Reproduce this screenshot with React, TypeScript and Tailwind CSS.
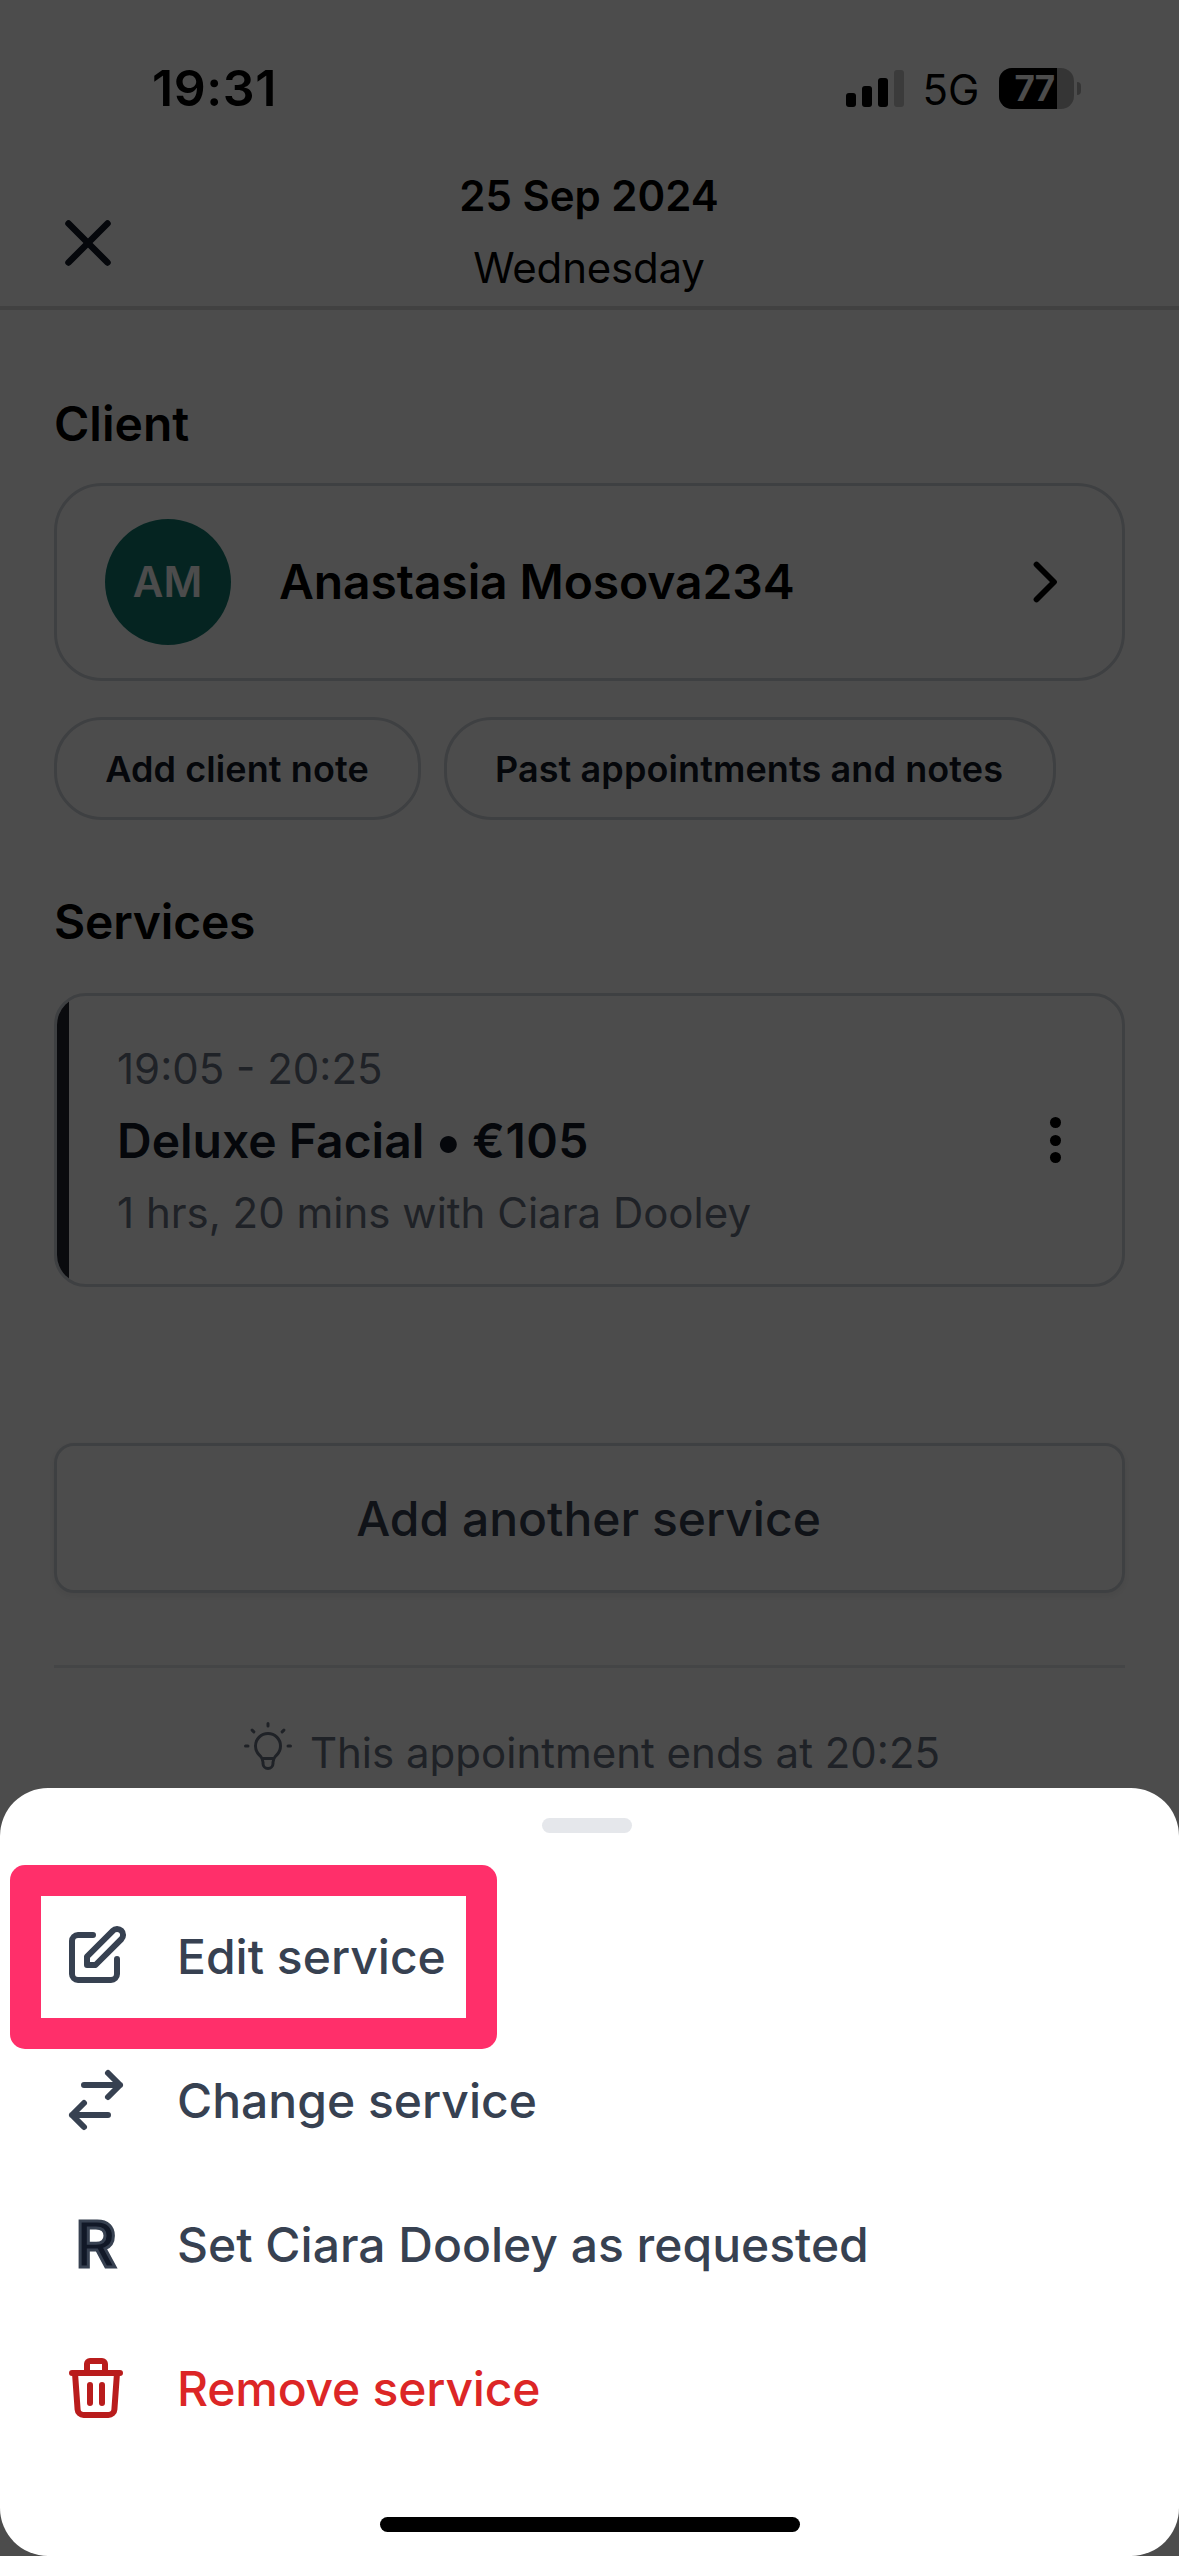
import React from 'react';

interface SheetAction {
  id: string;
  label: string;
  icon: React.ReactNode;
  danger?: boolean;
}

interface OutlineIconProps {
  d: string;
  className?: string;
  strokeWidth?: number;
}

function OutlineIcon({ d, className = 'size-[72px]', strokeWidth = 2 }: OutlineIconProps) {
  return (
    <svg
      viewBox="0 0 24 24"
      fill="none"
      stroke="currentColor"
      strokeWidth={strokeWidth}
      strokeLinecap="round"
      strokeLinejoin="round"
      className={`shrink-0 ${className}`}
    >
      <path d={d} />
    </svg>
  );
}

const icons = {
  close: 'M6 18L18 6M6 6l12 12',
  chevron: 'M9 5l7 7-7 7',
  bulb: 'M9.663 17h4.673M12 3v1m6.364 1.636l-.707.707M21 12h-1M4 12H3m3.343-5.657l-.707-.707m2.828 9.9a5 5 0 117.072 0l-.548.547A3.374 3.374 0 0014 18.469V19a2 2 0 11-4 0v-.531c0-.895-.356-1.754-.988-2.386l-.548-.547z',
  edit: 'M11 5H6a2 2 0 00-2 2v11a2 2 0 002 2h11a2 2 0 002-2v-5m-1.414-9.414a2 2 0 112.828 2.828L11.828 15H9v-2.828l8.586-8.586z',
  swap: 'M8 7h12m0 0l-4-4m4 4l-4 4m0 6H4m0 0l4 4m-4-4l4-4',
  trash: 'M19 7l-.867 12.142A2 2 0 0116.138 21H7.862a2 2 0 01-1.995-1.858L5 7m5 4v6m4-6v6m1-10V4a1 1 0 00-1-1h-4a1 1 0 00-1 1v3M4 7h16',
};

const actions: SheetAction[] = [
  { id: 'edit', label: 'Edit service', icon: <OutlineIcon d={icons.edit} /> },
  { id: 'change', label: 'Change service', icon: <OutlineIcon d={icons.swap} /> },
  {
    id: 'request',
    label: 'Set Ciara Dooley as requested',
    icon: (
      <span className="w-[72px] text-center text-[63px] leading-[72px] font-semibold text-[#111827] [-webkit-text-stroke:3px_#374151]">
        R
      </span>
    ),
  },
  { id: 'remove', label: 'Remove service', icon: <OutlineIcon d={icons.trash} />, danger: true },
];

function StatusBar() {
  return (
    <div className="h-[160px] pt-4 pl-[152px] pr-[98px] flex items-center justify-between">
      <span className="text-[50px] leading-none font-semibold tracking-[0.6px]">19:31</span>
      <div className="flex items-center">
        <div className="h-[37px] flex items-end gap-[6px]">
          <div className="w-[10px] h-[14px] rounded-[3px] bg-black" />
          <div className="w-[10px] h-[21px] rounded-[3px] bg-black" />
          <div className="w-[10px] h-[29px] rounded-[3px] bg-black" />
          <div className="w-[10px] h-[37px] rounded-[3px] bg-[#c5c5c5]" />
        </div>
        <span className="w-[58px] ml-[18px] mr-[19px] mt-1 text-center text-[42px] leading-none font-normal">5G</span>
        <div className="w-[75px] h-[41px] rounded-[13px] overflow-hidden bg-[#b3b3b3] flex">
          <div className="w-[58px] flex items-center justify-end pr-[3px] bg-black">
            <span className="text-[35px] leading-none font-bold text-white tracking-[-1px]">77</span>
          </div>
        </div>
        <div className="w-1 h-[13px] ml-[3px] rounded-r-full bg-[#b3b3b3]" />
      </div>
    </div>
  );
}

function Header() {
  return (
    <header className="flex border-b-4 border-[#dadada] pb-[2px]">
      <div className="w-[300px] pl-[49px] pt-[44px]">
        <OutlineIcon d={icons.close} className="size-[78px] text-[#111827]" />
      </div>
      <div className="flex-1 pr-px text-center text-[42px] leading-[72px]">
        <div className="font-semibold">25 Sep 2024</div>
        <div className="tracking-[-0.2px]">Wednesday</div>
      </div>
      <div className="w-[300px]" />
    </header>
  );
}

function ServiceCard() {
  return (
    <div className="h-[294px] mt-[35px] border-[3px] border-gray-300 rounded-[32px] overflow-hidden flex items-center">
      <div className="w-3 h-full shrink-0 bg-[#222530]" />
      <div className="flex-1 pl-[48px] pt-[2px] text-[42px] leading-[72px] text-gray-500">
        <div>19:05 - 20:25</div>
        <div className="h-[72px] flex text-[48px] font-semibold text-[#111827]">
          <span>Deluxe Facial</span>
          <span className="w-[48px] text-center text-[54px]">•</span>
          <span className="tracking-[0.5px]">€105</span>
        </div>
        <div>1 hrs, 20 mins with Ciara Dooley</div>
      </div>
      <div className="mr-[61px] flex flex-col gap-[6.5px]">
        <div className="size-[11px] rounded-full bg-black" />
        <div className="size-[11px] rounded-full bg-black" />
        <div className="size-[11px] rounded-full bg-black" />
      </div>
    </div>
  );
}

function ActionSheet() {
  return (
    <div className="absolute inset-x-0 bottom-0 h-[768px] bg-white rounded-[48px] flex flex-col items-center">
      <div className="w-[90px] h-[15px] mt-[30px] mr-[5px] rounded-full bg-gray-200" />
      <div className="w-full mt-[51px]">
        {actions.map((a) => (
          <button
            key={a.id}
            className={`w-full h-[144px] pl-[60px] flex items-center gap-[45px] text-left ${
              a.danger ? 'text-[#b91c1c]' : 'text-[#374151]'
            }`}
          >
            {a.icon}
            <span
              className={`pt-[2px] text-[48px] leading-[72px] font-medium ${
                a.danger ? 'text-[#dc2626] tracking-[-0.2px]' : ''
              }`}
            >
              {a.label}
            </span>
          </button>
        ))}
      </div>
      {/* Home indicator */}
      <div className="w-[420px] h-[15px] mt-[57px] rounded-full bg-black" />

      {/* Highlight around the first action */}
      <div className="absolute left-[10px] top-[77px] w-[487px] h-[184px] rounded-[15px] overflow-hidden">
        <div className="w-full h-full border-[31px] border-[#ff2f6a]" />
      </div>
    </div>
  );
}

export default function App() {
  return (
    <div className="relative w-[1179px] h-[2556px] overflow-hidden bg-white text-black font-['Inter',sans-serif]">
      <StatusBar />
      <Header />

      <main className="px-[54px] pt-[78px]">
        {/* Client */}
        <h2 className="text-[48px] leading-[72px] font-semibold">Client</h2>
        <div className="h-[198px] mt-[23px] pl-[48px] pr-[48px] border-[3px] border-gray-300 rounded-[48px] flex items-center">
          <div className="size-[126px] pr-px pb-px rounded-full bg-[#117b71] flex items-center justify-center text-[42px] font-semibold text-white">
            AM
          </div>
          <span className="flex-1 ml-[48px] text-[48px] font-semibold tracking-[-0.1px]">Anastasia Mosova234</span>
          <OutlineIcon d={icons.chevron} className="size-[60px]" strokeWidth={2.3} />
        </div>
        <div className="mt-[36px] flex gap-[23px] text-[36px] font-semibold text-[#111827] tracking-[0.1px]">
          <button className="h-[103px] w-[367px] pr-px border-[3px] border-gray-300 rounded-[48px]">Add client note</button>
          <button className="h-[103px] w-[612px] pr-[2px] border-[3px] border-gray-300 rounded-[48px]">
            Past appointments and notes
          </button>
        </div>

        {/* Services */}
        <h2 className="mt-[66px] text-[48px] leading-[72px] font-semibold tracking-[-0.2px]">Services</h2>
        <ServiceCard />
        <button className="w-full h-[150px] mt-[156px] pt-[2px] pr-[2px] border-[3px] border-gray-300 rounded-[20px] text-[48px] font-medium text-[#374151] shadow-[0_3px_9px_rgba(0,0,0,0.08)]">
          Add another service
        </button>
        <div className="h-[3px] mt-[72px] bg-gray-200" />
        <div className="mt-[48px] pr-px flex justify-center gap-[12px] text-[42px] leading-[60px] text-gray-500">
          <OutlineIcon d={icons.bulb} className="size-[60px]" strokeWidth={1.2} />
          <span className="mt-[7px]">This appointment ends at 20:25</span>
        </div>
      </main>

      <div className="absolute inset-0 bg-black/70" />
      <ActionSheet />
    </div>
  );
}
